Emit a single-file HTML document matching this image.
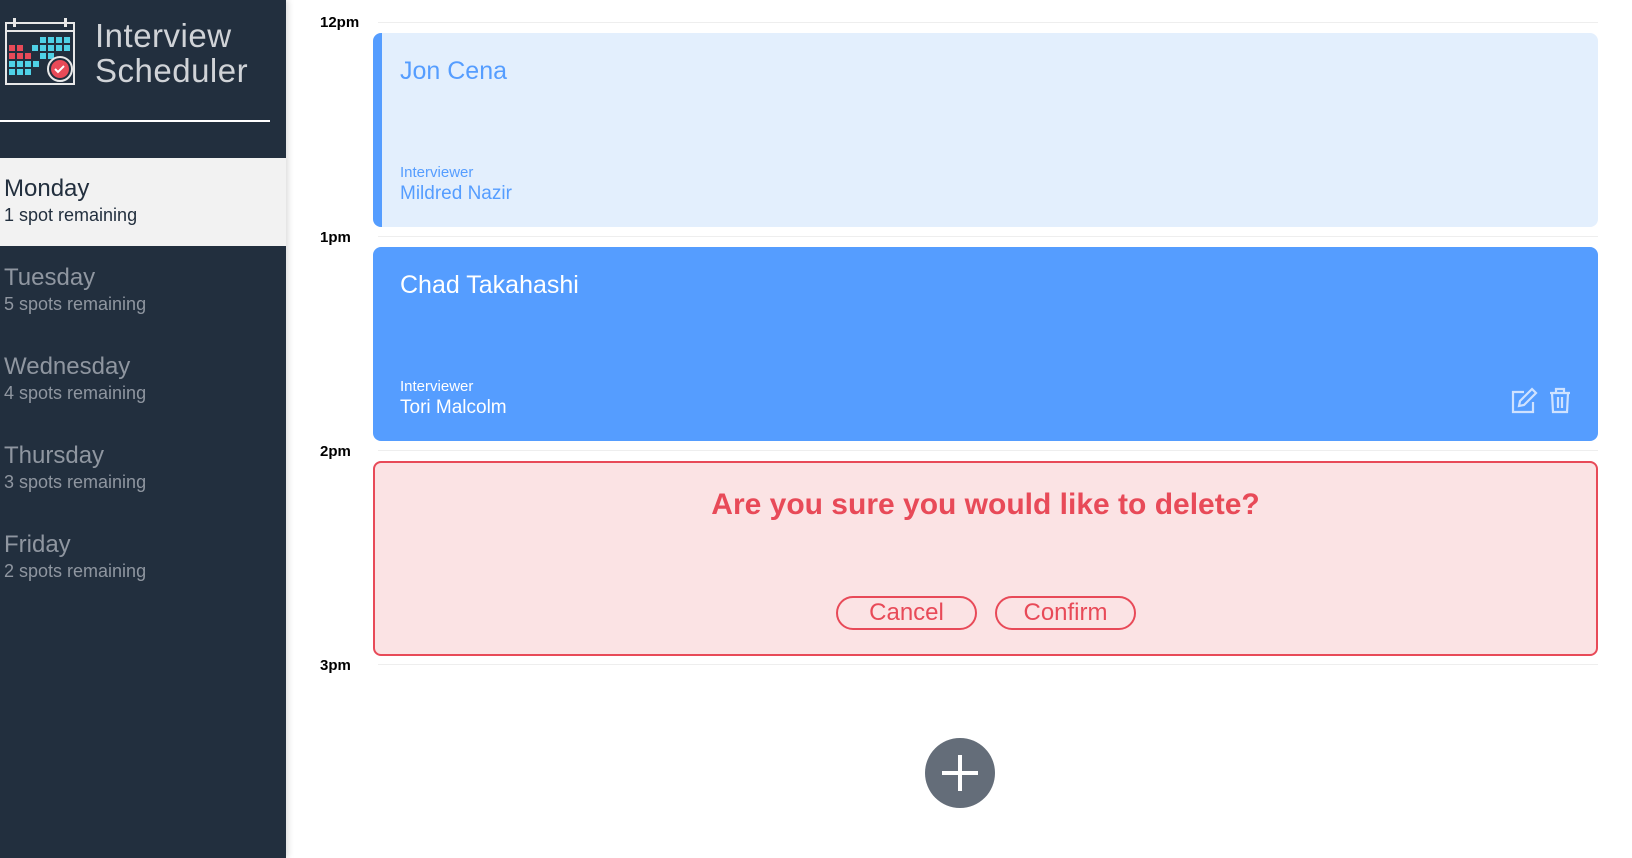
<!DOCTYPE html>
<html><head><meta charset="utf-8"><style>
*{box-sizing:border-box;margin:0;padding:0}
body{width:1632px;height:858px;overflow:hidden;background:#fff;font-family:"Liberation Sans",sans-serif;position:relative}
.side{position:absolute;left:0;top:0;width:286px;height:858px;background:#222f3e;box-shadow:2px 0 6px rgba(0,0,0,.15)}
.logo-t{position:absolute;left:95px;top:18px;color:#d0d3d7;font-size:33px;line-height:35px;font-weight:300;letter-spacing:.5px}
.hr{position:absolute;left:0;top:120px;width:270px;height:2px;background:#fff}
.day{position:absolute;left:0;width:286px;height:88px;padding:17px 0 0 4px;color:#8f96a0}
.day b{display:block;font-weight:normal;font-size:24px;line-height:28px}
.day span{display:block;font-size:18px;line-height:22px;margin-top:1px}
.day.sel{background:#f2f2f2;color:#222f3e}
.tl{position:absolute;left:320px;font-size:15px;font-weight:bold;color:#000}
.line{position:absolute;left:378px;width:1220px;height:1px;background:#eee}
.card{position:absolute;left:373px;width:1225px;height:194px;border-radius:8px}
.nm{position:absolute;left:27px;top:24px;font-size:25px}
.iv{position:absolute;left:27px;bottom:22px;font-size:15px;line-height:19px}
.iv div{font-size:19px;line-height:23px}
.btn{position:absolute;top:133px;width:141px;height:34px;border:2px solid #e84a58;border-radius:17px;color:#e84a58;font-size:24px;text-align:center;line-height:30px}
</style></head><body>
<div class="side">
<svg style="position:absolute;left:4px;top:16px" width="74" height="70" viewBox="0 0 74 70">
<rect x="2" y="7" width="68" height="61" fill="none" stroke="#e8e8e8" stroke-width="2"/>
<line x1="2" y1="15" x2="70" y2="15" stroke="#e8e8e8" stroke-width="2"/>
<rect x="9" y="2" width="3" height="9" fill="#e8e8e8"/><rect x="60" y="2" width="3" height="9" fill="#e8e8e8"/>
<g fill="#4fd1e6">
<rect x="36" y="21" width="6" height="6"/><rect x="44" y="21" width="6" height="6"/><rect x="52" y="21" width="6" height="6"/><rect x="60" y="21" width="6" height="6"/>
<rect x="28" y="29" width="6" height="6"/><rect x="36" y="29" width="6" height="6"/><rect x="44" y="29" width="6" height="6"/><rect x="52" y="29" width="6" height="6"/><rect x="60" y="29" width="6" height="6"/>
<rect x="36" y="37" width="6" height="6"/><rect x="44" y="37" width="6" height="6"/>
<rect x="5" y="45" width="6" height="6"/><rect x="13" y="45" width="6" height="6"/><rect x="21" y="45" width="6" height="6"/><rect x="29" y="45" width="6" height="6"/>
<rect x="5" y="53" width="6" height="6"/><rect x="13" y="53" width="6" height="6"/><rect x="21" y="53" width="6" height="6"/></g>
<g fill="#e84a58"><rect x="5" y="29" width="6" height="6"/><rect x="13" y="29" width="6" height="6"/><rect x="5" y="37" width="6" height="6"/><rect x="13" y="37" width="6" height="6"/><rect x="21" y="37" width="6" height="6"/></g>
<circle cx="56" cy="53" r="12" fill="#222f3e" stroke="#e8e8e8" stroke-width="2"/>
<circle cx="56" cy="53" r="9" fill="#e84a58"/>
<path d="M51 53l3 3 6-6" stroke="#fff" stroke-width="2" fill="none"/>
</svg>
<div class="logo-t">Interview<br>Scheduler</div>
<div class="hr"></div>
<div class="day sel" style="top:158px"><b>Monday</b><span>1 spot remaining</span></div>
<div class="day" style="top:247px"><b>Tuesday</b><span>5 spots remaining</span></div>
<div class="day" style="top:336px"><b>Wednesday</b><span>4 spots remaining</span></div>
<div class="day" style="top:425px"><b>Thursday</b><span>3 spots remaining</span></div>
<div class="day" style="top:514px"><b>Friday</b><span>2 spots remaining</span></div>
</div>

<div class="tl" style="top:14px">12pm</div><div class="line" style="top:22px"></div>
<div class="tl" style="top:229px">1pm</div><div class="line" style="top:236px"></div>
<div class="tl" style="top:443px">2pm</div><div class="line" style="top:450px"></div>
<div class="tl" style="top:657px">3pm</div><div class="line" style="top:664px"></div>

<div class="card" style="top:33px;background:#e3effd;border-left:9px solid #559dff;color:#559dff">
<div class="nm" style="left:18px">Jon Cena</div>
<div class="iv" style="left:18px">Interviewer<div>Mildred Nazir</div></div>
</div>
<div class="card" style="top:247px;background:#559dff;color:#fff">
<div class="nm">Chad Takahashi</div>
<div class="iv">Interviewer<div>Tori Malcolm</div></div>
<svg style="position:absolute;left:1137px;top:140px" width="66" height="28" viewBox="0 0 66 28" fill="none" stroke="#cfe2ff" stroke-width="2.2">
<path d="M14 5H3v20h20V15"/><path d="M9 19l1-5 12-12 4 4-12 12z"/>
<path d="M40 6h20M46 6V2h8v4M42 6l1 19h14l1-19M48 10v11M52 10v11"/>
</svg>
</div>
<div class="card" style="top:461px;height:195px;background:#fbe3e4;border:2px solid #e84a58;color:#e84a58">
<div style="position:absolute;left:0;right:0;top:25px;text-align:center;font-size:30px;font-weight:bold">Are you sure you would like to delete?</div>
<div class="btn" style="left:461px">Cancel</div>
<div class="btn" style="left:620px">Confirm</div>
</div>

<svg style="position:absolute;left:924px;top:737px" width="72" height="72" viewBox="0 0 72 72">
<circle cx="36" cy="36" r="35" fill="#646d79"/>
<path d="M36 18v36M18 36h36" stroke="#fff" stroke-width="4"/>
</svg>
</body></html>
